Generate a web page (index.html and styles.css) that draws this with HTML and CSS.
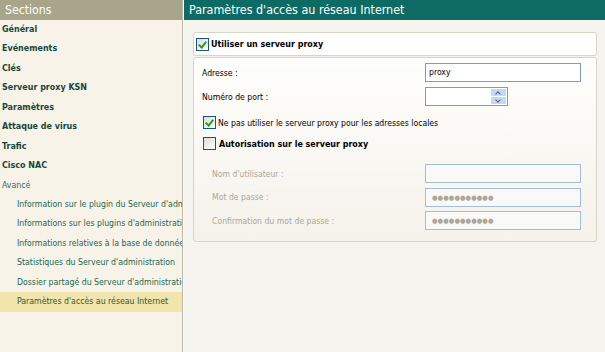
FILE: index.html
```html
<!DOCTYPE html>
<html lang="fr">
<head>
<meta charset="utf-8">
<title>Paramètres</title>
<link rel="stylesheet" href="styles.css">
</head>
<body>
<div class="app">
  <aside class="sidebar">
    <div class="side-head">Sections</div>
    <ul class="nav">
      <li class="nav-item bold">Général</li>
      <li class="nav-item bold">Evénements</li>
      <li class="nav-item bold">Clés</li>
      <li class="nav-item bold">Serveur proxy KSN</li>
      <li class="nav-item bold">Paramètres</li>
      <li class="nav-item bold">Attaque de virus</li>
      <li class="nav-item bold">Trafic</li>
      <li class="nav-item bold">Cisco NAC</li>
      <li class="nav-item group">Avancé</li>
      <li class="nav-item sub">Information sur le plugin du Serveur d'administration</li>
      <li class="nav-item sub">Informations sur les plugins d'administration</li>
      <li class="nav-item sub">Informations relatives à la base de données</li>
      <li class="nav-item sub">Statistiques du Serveur d'administration</li>
      <li class="nav-item sub">Dossier partagé du Serveur d'administration</li>
      <li class="nav-item sub selected">Paramètres d'accès au réseau Internet</li>
    </ul>
  </aside>
  <main class="main">
    <div class="main-head">Paramètres d'accès au réseau Internet</div>
    <div class="content">
      <div class="box box-head">
        <label class="check-row"><span class="cb checked"></span><span class="strong">Utiliser un serveur proxy</span></label>
      </div>
      <div class="box box-body">
        <div class="field">
          <span class="label">Adresse :</span>
          <span class="input">proxy</span>
        </div>
        <div class="field">
          <span class="label">Numéro de port :</span>
          <span class="input spin"><span class="spin-btns"><span class="spin-up"></span><span class="spin-down"></span></span></span>
        </div>
        <label class="check-row opt1"><span class="cb checked"></span><span>Ne pas utiliser le serveur proxy pour les adresses locales</span></label>
        <label class="check-row opt2"><span class="cb"></span><span class="strong">Autorisation sur le serveur proxy</span></label>
        <div class="field dis first">
          <span class="label">Nom d'utilisateur :</span>
          <span class="input disabled"></span>
        </div>
        <div class="field dis">
          <span class="label">Mot de passe :</span>
          <span class="input disabled"><span class="dots">●●●●●●●●●●●</span></span>
        </div>
        <div class="field dis">
          <span class="label">Confirmation du mot de passe :</span>
          <span class="input disabled"><span class="dots">●●●●●●●●●●●</span></span>
        </div>
      </div>
    </div>
  </main>
</div>
</body>
</html>
```
FILE: styles.css
```css
* { box-sizing: border-box; }
html, body { margin: 0; padding: 0; }
body {
  width: 605px;
  height: 352px;
  overflow: hidden;
  font-family: "DejaVu Sans Condensed", "DejaVu Sans", sans-serif;
  font-size: 8.6px;
  color: #000;
  background: #f5f3ee;
}
.app { display: flex; height: 352px; }

.sidebar {
  width: 183px;
  flex: none;
  background: #f7f3e8;
  border-right: 1px solid #bdb9a8;
  overflow: hidden;
}
.side-head {
  height: 20px;
  background: #a8a58b;
  color: #fff;
  font-size: 12.2px;
  line-height: 20px;
  padding-left: 5px;
}
.nav { list-style: none; margin: 0; padding: 0; }
.nav-item {
  height: 19.45px;
  line-height: 19.45px;
  white-space: nowrap;
  overflow: hidden;
  padding-left: 2px;
  color: #1f5a46;
}
.nav-item.bold { font-weight: bold; color: #17473a; font-size: 8.9px; }
.nav-item.group { color: #3b6a5c; font-size: 8.7px; }
.nav-item.sub { padding-left: 17px; color: #1e6652; font-size: 8.7px; }
.nav-item.selected { background: #f1e4ad; color: #2c5a3c; }

.main {
  flex: 1;
  border-left: 1px solid #fbfaf6;
  background: #f5f3ee;
}
.main-head {
  height: 20px;
  background: #0e6b63;
  color: #fff;
  font-size: 12.4px;
  line-height: 20px;
  padding-left: 5px;
}
.content { padding: 12px 8px 0 9px; }

.box {
  border: 1px solid #d9d5c4;
  border-radius: 3px;
}
.box-head {
  height: 24px;
  background: #fff;
  display: flex;
  align-items: center;
  padding-left: 2px;
}
.box-body {
  margin-top: 1px;
  height: 185px;
  background: linear-gradient(#fefefd, #f5f2ea);
  padding: 5px 14px 0 8px;
}

.check-row { display: flex; align-items: center; gap: 2px; }
.strong { font-weight: bold; font-size: 8.9px; }
.cb {
  width: 13px; height: 13px;
  border: 1px solid #1c5180;
  background: linear-gradient(135deg, #dcdcd7, #fff);
  position: relative;
  flex: none;
}
.cb.checked::after {
  content: "";
  position: absolute;
  left: 3px; top: 1px;
  width: 3px; height: 6px;
  border: solid #21a121;
  border-width: 0 2px 2px 0;
  transform: rotate(40deg);
}

.field {
  display: grid;
  grid-template-columns: 223px 156px;
  align-items: center;
  height: 19px;
  margin-bottom: 5px;
}
.input {
  width: 156px;
  height: 19px;
  border: 1px solid #7f9db9;
  background: #fff;
  padding-left: 3px;
  line-height: 17px;
  color: #000;
  display: block;
}
.input.spin { width: 83px; position: relative; }
.spin-btns {
  position: absolute;
  right: 1px; top: 1px; bottom: 1px;
  width: 15px;
  display: flex;
  flex-direction: column;
  gap: 1px;
}
.spin-up, .spin-down {
  flex: 1;
  background: #c6d6f5;
  border-radius: 1px;
  position: relative;
}
.spin-up::after, .spin-down::after {
  content: "";
  position: absolute;
  left: 5px; top: 2px;
  width: 3px; height: 3px;
  border: solid #4d6185;
  border-width: 1px 0 0 1px;
}
.spin-up::after { transform: rotate(45deg); top: 3px; }
.spin-down::after { transform: rotate(225deg); top: 1px; }

.opt1 { margin-top: 10px; margin-left: 1px; }
.opt2 { margin-top: 8px; margin-left: 1px; }
.opt2 .strong { margin-left: 1px; }

.field.dis { margin-bottom: 4.5px; }
.field.dis.first { margin-top: 14px; }
.field.dis .label { color: #aca899; padding-left: 10px; }
.input.disabled { border-color: #a5bdd8; background: #f9f9f7; }
.dots { color: #aca899; font-size: 7px; letter-spacing: 0.1px; padding-left: 3px; }
```
